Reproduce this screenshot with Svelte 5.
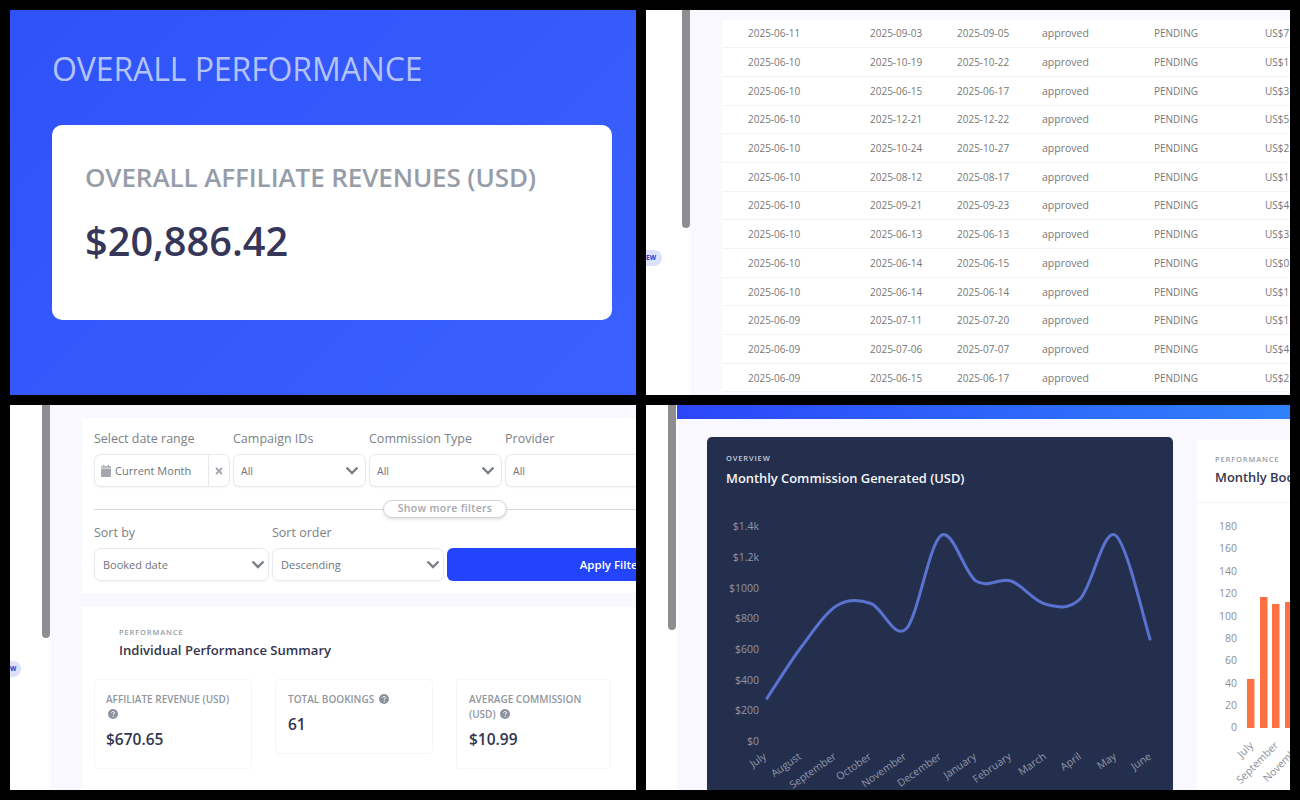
<script>
  const rows = [
    ['2025-06-11','2025-09-03','2025-09-05','US$7'],['2025-06-10','2025-10-19','2025-10-22','US$1'],
    ['2025-06-10','2025-06-15','2025-06-17','US$3'],['2025-06-10','2025-12-21','2025-12-22','US$5'],
    ['2025-06-10','2025-10-24','2025-10-27','US$2'],['2025-06-10','2025-08-12','2025-08-17','US$1'],
    ['2025-06-10','2025-09-21','2025-09-23','US$4'],['2025-06-10','2025-06-13','2025-06-13','US$3'],
    ['2025-06-10','2025-06-14','2025-06-15','US$0'],['2025-06-10','2025-06-14','2025-06-14','US$1'],
    ['2025-06-09','2025-07-11','2025-07-20','US$1'],['2025-06-09','2025-07-06','2025-07-07','US$4'],
    ['2025-06-09','2025-06-15','2025-06-17','US$2']
  ];
  const pts = [[767,698.3],[802,646],[837,605.5],[871,603.5],[906,629],[941,535.5],[976,581],[1011,581],[1045,604],[1080,599],[1115,535],[1150,639]]
    .map(([x,y]) => [x-707,y-492]);
  function smooth(p){
    let d = `M${p[0][0].toFixed(1)} ${p[0][1].toFixed(1)}`;
    for(let i=0;i<p.length-1;i++){
      const a=p[Math.max(i-1,0)],b=p[i],c=p[i+1],e=p[Math.min(i+2,p.length-1)];
      d+=` C${(b[0]+(c[0]-a[0])/6).toFixed(1)} ${(b[1]+(c[1]-a[1])/6).toFixed(1)} ${(c[0]-(e[0]-b[0])/6).toFixed(1)} ${(c[1]-(e[1]-b[1])/6).toFixed(1)} ${c[0].toFixed(1)} ${c[1].toFixed(1)}`;
    }
    return d;
  }
  const line = smooth(pts);
  const yDark = [['$1.4k',526],['$1.2k',557],['$1000',588],['$800',618],['$600',649],['$400',680],['$200',710],['$0',741]];
  const xDark = [['July',767],['August',802],['September',837],['October',872],['November',907],['December',942],['January',977],['February',1012],['March',1047],['April',1082],['May',1117],['June',1152]];
  const yBar = [[180,526],[160,548],[140,571],[120,593],[100,616],[80,638],[60,660],[40,683],[20,705],[0,727]];
  const bars = [[1247,679],[1260,597],[1272,604],[1285,602]];
  const xBar = [['July',1254],['September',1279],['November',1304]];
</script>

{#snippet help()}
  <svg class="help" viewBox="0 0 16 16" aria-hidden="true"><circle cx="8" cy="8" r="8" fill="#8b92a0"/><path d="M5.700 6.300c0-1.400 1-2.200 2.400-2.200s2.300.8 2.300 2c0 1.700-2 1.700-2 3.300" fill="none" stroke="#fff" stroke-width="1.600"/><circle cx="8.300" cy="11.800" r="1" fill="#fff"/></svg>
{/snippet}
{#snippet chevron()}
  <svg class="chev" viewBox="0 0 14 9" aria-hidden="true"><path d="M1.500 1.500 7 7l5.500-5.500" fill="none" stroke="#7b8088" stroke-width="2.400"/></svg>
{/snippet}
{#snippet select(text, cls)}
  <div class="select {cls}"><span>{text}</span>{@render chevron()}</div>
{/snippet}

<div class="page">
  <section class="panel hero">
    <h1>OVERALL PERFORMANCE</h1>
    <div class="hero-card">
      <h2>OVERALL AFFILIATE REVENUES (USD)</h2>
      <div class="hero-value">$20,886.42</div>
    </div>
  </section>

  <section class="panel app">
    <aside class="side"><span class="thumb t1"></span><span class="pill p1">EW</span></aside>
    <div class="main table-main">
      <div class="table">
        {#each rows as r}
          <div class="row">
            <span>{r[0]}</span><span>{r[1]}</span><span>{r[2]}</span><span>approved</span><span>PENDING</span><span>{r[3]}</span>
          </div>
        {/each}
      </div>
    </div>
  </section>

  <section class="panel app">
    <aside class="side filters-side"><span class="thumb t2"></span><span class="pill p2">W</span></aside>
    <div class="main filters-main">
      <div class="filters">
        <div class="filter-row">
          <label class="f1">Select date range
            <div class="select date"><svg class="cal" viewBox="0 0 10 12" aria-hidden="true"><path d="M0 3.500h10V12H0zM2 0h1.500v2H2zM6.500 0H8v2H6.500zM0 1.300h10v1.400H0z" fill="#a4a8ae"/></svg><span>Current Month</span><b><svg viewBox="0 0 8 8" aria-hidden="true"><path d="M1 1l6 6M7 1 1 7" stroke="#a4a8ae" stroke-width="1.800" fill="none"/></svg></b></div>
          </label>
          <label class="f2">Campaign IDs {@render select('All','s')}</label>
          <label class="f3">Commission Type {@render select('All','s')}</label>
          <label class="f4">Provider <div class="select s open"><span>All</span></div></label>
        </div>
        <div class="divider"><span>Show more filters</span></div>
        <div class="filter-row sort">
          <label class="f5">Sort by {@render select('Booked date','s')}</label>
          <label class="f6">Sort order {@render select('Descending','s')}</label>
          <button>Apply Filters</button>
        </div>
      </div>
      <div class="summary">
        <div class="summary-head"><small>PERFORMANCE</small><h3>Individual Performance Summary</h3></div>
        <div class="metrics">
          <div class="metric m1"><h4>AFFILIATE REVENUE (USD) {@render help()}</h4><strong>$670.65</strong></div>
          <div class="metric m2"><h4>TOTAL BOOKINGS {@render help()}</h4><strong>61</strong></div>
          <div class="metric m3"><h4>AVERAGE COMMISSION (USD) {@render help()}</h4><strong>$10.99</strong></div>
        </div>
      </div>
    </div>
  </section>

  <section class="panel app">
    <aside class="side narrow"><span class="thumb t3"></span></aside>
    <div class="main charts-main">
      <div class="bluebar"></div>
      <div class="charts">
        <div class="chart dark">
          <small>OVERVIEW</small>
          <h3>Monthly Commission Generated (USD)</h3>
          <svg class="plot" viewBox="0 0 466 298" aria-hidden="true">
            {#each yDark as [t,y]}<text x="52" y={y-492+4} text-anchor="end" class="ax-dark">{t}</text>{/each}
            {#each xDark as [t,x]}<text transform="translate({x-707} {751-492+7}) rotate(-35)" text-anchor="end" class="ax-dark">{t}</text>{/each}
            <path d={line} fill="none" stroke="#5a72d0" stroke-width="3" stroke-linecap="round"/>
          </svg>
        </div>
        <div class="chart light">
          <small>PERFORMANCE</small>
          <h3>Monthly Bookings</h3>
          <div class="rule"></div>
          <svg class="plot bars" viewBox="0 0 93 290" aria-hidden="true">
            {#each yBar as [t,y]}<text x="40" y={y-500+4} text-anchor="end" class="ax-light">{t}</text>{/each}
            {#each bars as [x,y]}<rect x={x-1197} y={y-500} width="7.500" height={728-y} fill="#ff7043"/>{/each}
            {#each xBar as [t,x]}<text transform="translate({x-1197} {746-500}) rotate(-45)" text-anchor="end" class="ax-light">{t}</text>{/each}
          </svg>
        </div>
      </div>
    </div>
  </section>
</div>

<style>
  :global(body){margin:0;background:#000;}
  .page{width:1300px;height:800px;box-sizing:border-box;padding:10px;display:grid;grid-template-columns:626px 644px;grid-template-rows:385px 385px;gap:10px;background:#000;font-family:"Open Sans","Liberation Sans",sans-serif;overflow:hidden;}
  .panel{overflow:hidden;min-width:0;position:relative;}

  .hero{background:linear-gradient(135deg,#2e52f8,#3a61ff);padding:38px 24px 0 42px;}
  .hero h1{margin:0 0 35px;font-weight:400;font-size:32px;line-height:42px;color:#b4c3f5;letter-spacing:-.1px;white-space:nowrap;}
  .hero-card{height:195px;box-sizing:border-box;background:#fff;border-radius:10px;padding:34px 33px;}
  .hero-card h2{margin:0;font-size:26px;line-height:36px;font-weight:600;color:#969da9;white-space:nowrap;letter-spacing:-.1px;}
  .hero-value{margin-top:20px;font-size:39.700px;line-height:52px;font-weight:600;color:#36365a;}

  .app{display:flex;background:#fff;}
  .side{width:44px;flex:none;position:relative;background:#fff;}
  .side.narrow{width:31px;}
  .side.filters-side{width:40px;}
  .thumb{position:absolute;width:7.500px;background:#8e8d92;border-radius:0 0 4px 4px;top:0;}
  .t1{left:36px;height:218px;}
  .t2{left:32px;height:233px;}
  .t3{left:22px;height:225px;}
  .pill{position:absolute;background:#dce1fb;color:#2340c8;font-size:6.500px;font-weight:700;border-radius:0 8px 8px 0;height:16px;line-height:16px;left:0;}
  .p1{top:240px;width:16px;}
  .p2{top:256px;width:11px;}
  .main{flex:1;min-width:0;background:#f8f8fe;}

  .table-main{padding:10px 0 0 32px;}
  .table{background:#fff;margin-top:-.5px;}
  .row{display:grid;grid-template-columns:122px 87px 85px 112px 111px 1fr;padding-left:26px;height:28.700px;box-sizing:border-box;border-bottom:1px solid #f3f3f7;align-items:center;font-size:10px;color:#777;white-space:nowrap;overflow:hidden;}
  .row span:nth-child(4){font-size:10.500px;}

  .filters-main{padding:13px 0 0 32px;}
  .filters{background:#fff;height:175px;box-sizing:border-box;padding:11px 0 0 12px;width:580px;}
  .filter-row{display:flex;gap:3px;}
  label{display:block;flex:none;font-size:12.500px;line-height:20px;color:#7b7f86;white-space:nowrap;}
  .f1{width:136px}.f2{width:133px}.f3{width:133px}.f4{width:136px}
  .f5{width:175px}.f6{width:172px}
  .select{display:flex;align-items:center;justify-content:space-between;box-sizing:border-box;height:33px;margin-top:5px;border:1px solid #e8e9ee;border-radius:7px;padding:0 6px 0 7px;font-size:10.500px;color:#6f747c;background:#fff;box-shadow:0 1px 2px #0000000d;}
  .select.open{border-right:0;border-radius:7px 0 0 7px;}
  .date{justify-content:flex-start;gap:4px;padding:0 0 0 6px;font-size:11px;}
  .date b{margin-left:auto;width:20px;height:100%;flex:none;border-left:1px solid #e8e9ee;display:flex;align-items:center;justify-content:center;}
  .date b svg{width:8px;height:8px;}
  .cal{width:10px;height:12px;}
  .chev{width:14px;height:9px;}
  .divider{position:relative;height:1px;background:#d5d7dc;margin:22px 0 0;}
  .divider span{position:absolute;left:289px;top:-9px;width:124px;height:18px;box-sizing:border-box;border:1px solid #cfd2d8;border-radius:9px;background:#fff;box-shadow:0 2px 3px #0000001a;font-size:10.500px;font-weight:600;color:#a3a8b0;text-align:center;line-height:15px;letter-spacing:.3px;}
  .sort{margin-top:13px;}
  .sort .select{font-size:11px;padding:0 3px 0 8px;}
  button{flex:none;margin-top:25px;width:334px;height:33px;border:0;border-radius:6px;background:#2244fb;color:#fff;font:600 11.500px "Open Sans","Liberation Sans",sans-serif;text-align:center;padding:0;white-space:nowrap;}

  .summary{margin-top:14px;background:#fff;height:190px;box-sizing:border-box;width:580px;padding:20px 0 0 12px;}
  .summary-head{padding-left:25px;}
  small{display:block;font-size:7.500px;line-height:10px;letter-spacing:.85px;font-weight:600;color:#989ca5;}
  h3{margin:0;font-size:12.900px;line-height:20px;font-weight:600;color:#33354f;white-space:nowrap;}
  .summary h3{margin-top:3px;font-size:13.100px;}
  .metrics{display:flex;margin-top:19px;align-items:flex-start;}
  .metric{box-sizing:border-box;width:158px;height:90px;border:1px solid #f6f6fa;border-radius:4px;padding:12px 11px;flex:none;}
  .m2{margin-left:23px;height:75px;padding-left:12px;}
  .m3{margin-left:23px;width:155px;padding-left:12px;}
  h4{margin:0;font-size:10px;line-height:15px;font-weight:600;color:#9096a2;}
  .help{width:10px;height:10px;vertical-align:-1px;margin-left:2px;}
  strong{display:block;margin-top:7px;font-size:15.500px;line-height:20px;font-weight:600;color:#33354f;}
  .m2 strong{margin-top:7px;}

  .charts-main{display:flex;flex-direction:column;}
  .bluebar{height:14px;flex:none;background:linear-gradient(90deg,#2b47f9,#2f80fb);}
  .charts{display:flex;padding:18px 0 0 30px;gap:24px;flex:1;min-height:0;}
  .chart{flex:none;box-sizing:border-box;}
  .dark{width:466px;background:#242f4d;border-radius:5px 5px 0 0;padding:16px 0 0;}
  .dark small{color:#c9cdd8;padding-left:19px;}
  .dark h3{color:#f5f6fa;padding:5px 0 0 19px;}
  .plot{display:block;}
  .dark .plot{width:466px;height:298px;margin-top:4px;}
  .ax-dark{font-size:10.500px;fill:#8f96a8;font-family:"Open Sans","Liberation Sans",sans-serif;}
  .ax-light{font-size:10.500px;fill:#8b8f98;font-family:"Open Sans","Liberation Sans",sans-serif;}
  .light{width:100px;background:#fff;padding-top:14px;margin-top:3px;}
  .light small{padding-left:18px;white-space:nowrap;}
  .light h3{padding:3px 0 0 18px;}
  .rule{height:1px;background:#f2f2f6;margin-top:15px;}
  .bars{width:93px;height:290px;margin-top:-3px;overflow:visible;}
</style>
